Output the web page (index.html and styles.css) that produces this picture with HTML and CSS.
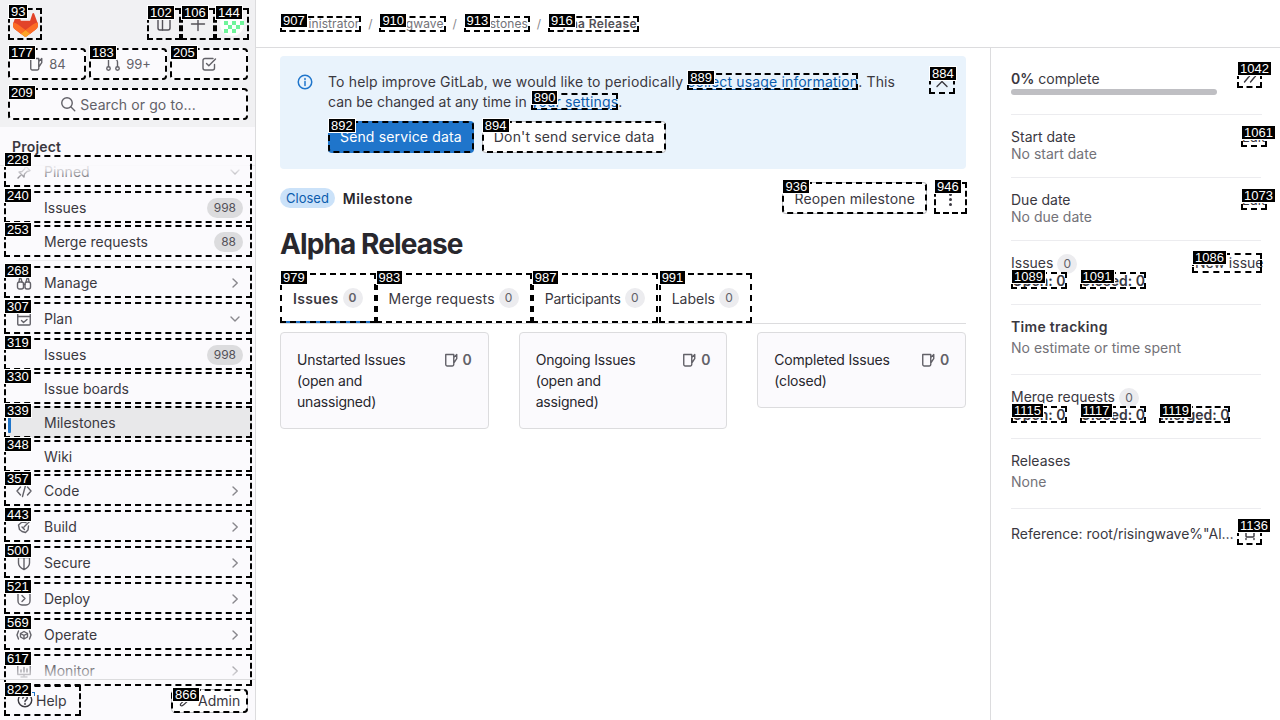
FILE: index.html
```html
<!DOCTYPE html>
<html lang="en">
<head>
<meta charset="utf-8">
<title>Alpha Release · Milestones</title>
<link rel="stylesheet" href="styles.css">
</head>
<body>
<svg class="defs" width="0" height="0" aria-hidden="true">
  <symbol id="i-issues" viewBox="0 0 16 16"><path d="M2.750 2.500h8v10a1.500 1.500 0 0 1-1.500 1.500h-5a1.500 1.500 0 0 1-1.500-1.500zM10.750 5.500l3-3v4.200l-3 4.300"/></symbol>
  <symbol id="i-mr" viewBox="0 0 16 16"><circle cx="3.500" cy="12.500" r="1.750"/><circle cx="12.500" cy="12.500" r="1.750"/><path d="M3.500 10.500v-8M1.500 2.500h4M12.500 10.500V6a3 3 0 0 0-3-3H8.500"/></symbol>
  <symbol id="i-todo" viewBox="0 0 16 16"><path d="M13.500 8.500v3.500a2 2 0 0 1-2 2H4a2 2 0 0 1-2-2V4.500a2 2 0 0 1 2-2h8M5.500 7.500l2.300 2.300L14.500 3"/></symbol>
  <symbol id="i-search" viewBox="0 0 16 16"><circle cx="7" cy="7" r="5.250"/><path d="m11 11 3.750 3.750"/></symbol>
  <symbol id="i-panel" viewBox="0 0 16 16"><rect x="2" y="2" width="12" height="12" rx="2"/><path d="M6.500 2v12"/></symbol>
  <symbol id="i-plus" viewBox="0 0 16 16"><path d="M8 1.500v13M1.500 8h13"/></symbol>
  <symbol id="i-pin" viewBox="0 0 16 16"><path d="M9.500 2 14 6.500l-3 1-2.500 2.500-.5 3L3 8l3-.5L8.500 5zM5.500 10.500 2 14"/></symbol>
  <symbol id="i-manage" viewBox="0 0 16 16"><rect x="1.500" y="7" width="6" height="7" rx="2"/><rect x="9" y="7" width="5.500" height="7" rx="2"/><path d="M7.500 9.500H9M3 7l.5-3.500h1.500L6 7M13 7l-.5-3.500H11L10 7"/></symbol>
  <symbol id="i-plan" viewBox="0 0 16 16"><rect x="1.750" y="2" width="12.500" height="12" rx="1"/><path d="M1.750 5.500h12.500M5.500 9.500l2 2 3.500-3"/></symbol>
  <symbol id="i-code" viewBox="0 0 16 16"><path d="M4.500 4 1 8l3.500 4M11.500 4 15 8l-3.500 4M9.500 2.500l-3 11"/></symbol>
  <symbol id="i-build" viewBox="0 0 16 16"><path d="M14.500 1c-.5 1.500-1.500 2.500-3 3.500L8 8M10 3.500 6 3 2.500 6l1 4.500 2.500 2 3.500 1 2.500-2.500.5-4M6 8l2.500 2.500"/></symbol>
  <symbol id="i-shield" viewBox="0 0 16 16"><path d="M2.500 2.500h11V8c0 3-2.500 5.200-5.500 6.500C5 13.200 2.500 11 2.500 8zM8 2.500v12"/></symbol>
  <symbol id="i-deploy" viewBox="0 0 16 16"><path d="M2 3v7a4 4 0 0 0 4 4h4a4 4 0 0 0 4-4V3M6 4.500l3 3-3 3M13 2.500h1"/></symbol>
  <symbol id="i-operate" viewBox="0 0 16 16"><path d="M8 4.500 11.500 6.500v3.500L8 12 4.500 10V6.500zM8 8.500V12M8 8.500l3.500-2M8 8.500l-3.500-2M2.500 4 1 8l1.500 4M13.500 4 15 8l-1.500 4"/></symbol>
  <symbol id="i-monitor" viewBox="0 0 16 16"><rect x="1.750" y="2" width="12.500" height="9.500"/><path d="M5 14h6M8 11.500V14M5 9V7M8 9V4.500M11 9V6"/></symbol>
  <symbol id="i-help" viewBox="0 0 16 16"><circle cx="8" cy="8" r="6.750"/><path d="M5.800 6.200c.2-1.300 1.100-2 2.300-2 1.300 0 2.200.8 2.200 1.900 0 1.800-2.300 1.700-2.300 3.500"/><path d="M8 11.400v1"/></symbol>
  <symbol id="i-admin" viewBox="0 0 16 16"><path d="M14.500 5.500c-.3 1.900-2.400 3.100-4.300 2.400L5 12.500c-.8.800-2 1.600-3 .8-.8-.9-.2-2.100.7-2.900l5-4.900c-.5-2 1-3.900 3-4l-1 2.200 1.800 1.800z"/></symbol>
  <symbol id="i-right" viewBox="0 0 16 16"><path d="m6 4 4.250 4L6 12"/></symbol>
  <symbol id="i-down" viewBox="0 0 16 16"><path d="M4 6l4 4 4-4"/></symbol>
  <symbol id="i-up" viewBox="0 0 16 16"><path d="M3 10.500 8 5.500l5 5"/></symbol>
  <symbol id="i-info" viewBox="0 0 16 16"><circle cx="8" cy="8" r="6.750"/><path d="M8 7.500V11.500M8 4.500v1"/></symbol>
  <symbol id="i-dchev" viewBox="0 0 16 16"><path d="m2.500 2 5 6-5 6M8.500 2l5 6-5 6"/></symbol>
  <symbol id="i-copy" viewBox="0 0 16 16"><rect x="4" y="4" width="8" height="8" rx="1"/><path d="M4 1.500v1M12 1.500v1M4 13.500v1M12 13.500v1"/></symbol>
</svg>

<aside class="sidebar">
  <div class="top">
    <div class="top-row">
      <a class="mark logo"><span class="tag">93</span>
        <svg width="25" height="24" viewBox="0 0 25 24"><path d="m24.507 9.5-.034-.09L21.082.562a.896.896 0 0 0-1.694.091l-2.29 7.01H7.825L5.535.653a.898.898 0 0 0-1.694-.09L.451 9.411.416 9.5a6.297 6.297 0 0 0 2.09 7.278l.012.01.03.022 5.16 3.867 2.56 1.935 1.554 1.176a1.051 1.051 0 0 0 1.268 0l1.555-1.176 2.56-1.935 5.197-3.89.014-.01A6.297 6.297 0 0 0 24.507 9.5Z" fill="#E24329"/><path d="m24.507 9.5-.034-.09a11.44 11.44 0 0 0-4.56 2.051l-7.447 5.632 4.742 3.584 5.197-3.89.014-.01A6.297 6.297 0 0 0 24.507 9.5Z" fill="#FC6D26"/><path d="m7.707 20.677 2.56 1.935 1.555 1.176a1.051 1.051 0 0 0 1.268 0l1.555-1.176 2.56-1.935-4.743-3.584-4.755 3.584Z" fill="#FCA326"/><path d="M5.01 11.461a11.43 11.43 0 0 0-4.56-2.05L.416 9.5a6.297 6.297 0 0 0 2.09 7.278l.012.01.03.022 5.16 3.867 4.745-3.584-7.444-5.632Z" fill="#FC6D26"/></svg>
      </a>
      <span class="grow"></span>
      <a class="mark square"><span class="tag">102</span><svg class="ico"><use href="#i-panel"/></svg></a>
      <a class="mark square"><span class="tag">106</span><svg class="ico"><use href="#i-plus"/></svg></a>
      <a class="mark square"><span class="tag">144</span>
        <svg width="24" height="24" viewBox="0 0 24 24"><circle cx="12" cy="12" r="12" fill="#fff"/><path d="M4 9h4v4H4zM12 9h4v4h-4zM20 9h4v4h-4zM8 13h4v4H8zM16 13h4v4h-4zM4 17h4v4H4zM12 17h4v4h-4z" fill="#6ff59a"/></svg>
      </a>
    </div>
    <div class="counts">
      <a class="mark count"><span class="tag">177</span><svg class="ico"><use href="#i-issues"/></svg><span>84</span></a>
      <a class="mark count"><span class="tag">183</span><svg class="ico"><use href="#i-mr"/></svg><span>99+</span></a>
      <a class="mark count"><span class="tag">205</span><svg class="ico"><use href="#i-todo"/></svg></a>
    </div>
    <a class="mark search"><span class="tag">209</span><svg class="ico"><use href="#i-search"/></svg><span>Search or go to...</span></a>
  </div>

  <div class="project-head">Project</div>
  <nav class="nav">
    <a class="row mark pinned"><span class="tag">228</span><svg class="ico"><use href="#i-pin"/></svg><span class="lbl">Pinned</span><svg class="ico chev"><use href="#i-down"/></svg></a>
    <a class="row mark first-pin plain"><span class="tag">240</span><span class="lbl">Issues</span><span class="pill">998</span></a>
    <a class="row mark tight plain"><span class="tag">253</span><span class="lbl">Merge requests</span><span class="pill">88</span></a>
    <div class="sep"></div>
    <a class="row mark"><span class="tag">268</span><svg class="ico"><use href="#i-manage"/></svg><span class="lbl">Manage</span><svg class="ico chev"><use href="#i-right"/></svg></a>
    <a class="row mark group"><span class="tag">307</span><svg class="ico"><use href="#i-plan"/></svg><span class="lbl">Plan</span><svg class="ico chev"><use href="#i-down"/></svg></a>
    <a class="row mark group plain"><span class="tag">319</span><span class="lbl">Issues</span><span class="pill">998</span></a>
    <a class="row mark tight plain"><span class="tag">330</span><span class="lbl">Issue boards</span></a>
    <a class="row mark tight plain active"><span class="tag">339</span><span class="lbl">Milestones</span></a>
    <a class="row mark tight plain"><span class="tag">348</span><span class="lbl">Wiki</span></a>
    <a class="row mark tight"><span class="tag">357</span><svg class="ico"><use href="#i-code"/></svg><span class="lbl">Code</span><svg class="ico chev"><use href="#i-right"/></svg></a>
    <a class="row mark group"><span class="tag">443</span><svg class="ico"><use href="#i-build"/></svg><span class="lbl">Build</span><svg class="ico chev"><use href="#i-right"/></svg></a>
    <a class="row mark group"><span class="tag">500</span><svg class="ico"><use href="#i-shield"/></svg><span class="lbl">Secure</span><svg class="ico chev"><use href="#i-right"/></svg></a>
    <a class="row mark group"><span class="tag">521</span><svg class="ico"><use href="#i-deploy"/></svg><span class="lbl">Deploy</span><svg class="ico chev"><use href="#i-right"/></svg></a>
    <a class="row mark group"><span class="tag">569</span><svg class="ico"><use href="#i-operate"/></svg><span class="lbl">Operate</span><svg class="ico chev"><use href="#i-right"/></svg></a>
    <a class="row mark group"><span class="tag">617</span><svg class="ico"><use href="#i-monitor"/></svg><span class="lbl">Monitor</span><svg class="ico chev"><use href="#i-right"/></svg></a>
  </nav>
  <div class="foot">
    <a class="mark help"><span class="tag">822</span><svg class="ico"><use href="#i-help"/></svg><span>Help</span></a>
    <a class="mark admin"><span class="tag">866</span><svg class="ico"><use href="#i-admin"/></svg><span>Admin</span></a>
  </div>
</aside>

<div class="main">
  <header class="crumbs">
    <a class="mark crumb"><span class="tag">907</span>Administrator</a><span class="slash">/</span>
    <a class="mark crumb"><span class="tag">910</span>risingwave</a><span class="slash">/</span>
    <a class="mark crumb"><span class="tag">913</span>Milestones</a><span class="slash">/</span>
    <a class="mark crumb current"><span class="tag">916</span>Alpha Release</a>
  </header>
  <div class="body">
    <main class="content">
      <section class="banner">
        <svg class="ico info"><use href="#i-info"/></svg>
        <div class="banner-text">
          <p>To help improve GitLab, we would like to periodically <a class="mark link"><span class="tag">889</span>collect usage information</a>. This <span class="tail">can be changed at any time in</span> <a class="mark link"><span class="tag">890</span>your settings</a>.</p>
          <div class="banner-btns">
            <a class="mark btn primary"><span class="tag">892</span>Send service data</a>
            <a class="mark btn"><span class="tag">894</span>Don't send service data</a>
          </div>
        </div>
        <a class="mark close"><span class="tag">884</span><svg class="ico"><use href="#i-up"/></svg></a>
      </section>

      <div class="status">
        <span class="badge">Closed</span>
        <strong class="status-name">Milestone</strong>
        <span class="grow"></span>
        <a class="mark btn reopen"><span class="tag">936</span>Reopen milestone</a>
        <a class="mark more"><span class="tag">946</span><span class="dots"><i></i><i></i><i></i></span></a>
      </div>

      <h1 class="title">Alpha Release</h1>

      <div class="tabs">
        <a class="mark tab on"><span class="tag">979</span>Issues<span class="num">0</span></a>
        <a class="mark tab wide"><span class="tag">983</span>Merge requests<span class="num">0</span></a>
        <a class="mark tab narrow"><span class="tag">987</span>Participants<span class="num">0</span></a>
        <a class="mark tab"><span class="tag">991</span>Labels<span class="num">0</span></a>
      </div>

      <div class="cards">
        <div class="card"><span class="card-title">Unstarted Issues (open and unassigned)</span><span class="card-count"><svg class="ico"><use href="#i-issues"/></svg>0</span></div>
        <div class="card"><span class="card-title">Ongoing Issues (open and assigned)</span><span class="card-count"><svg class="ico"><use href="#i-issues"/></svg>0</span></div>
        <div class="card"><span class="card-title">Completed Issues (closed)</span><span class="card-count"><svg class="ico"><use href="#i-issues"/></svg>0</span></div>
      </div>
    </main>

    <aside class="panel">
      <section class="block b-progress">
        <div class="progress">
          <div><b>0%</b> complete</div>
          <div class="bar"></div>
        </div>
        <a class="mark iconbtn"><span class="tag">1042</span><svg class="ico"><use href="#i-dchev"/></svg></a>
      </section>
      <section class="block b-date">
        <div><div>Start date</div><div class="muted">No start date</div></div>
        <a class="mark edit"><span class="tag">1061</span>Edit</a>
      </section>
      <section class="block b-date">
        <div><div>Due date</div><div class="muted">No due date</div></div>
        <a class="mark edit"><span class="tag">1073</span>Edit</a>
      </section>
      <section class="block b-links">
        <div class="head-line"><span>Issues<span class="num side">0</span></span><a class="mark newissue"><span class="tag">1086</span>New issue</a></div>
        <div class="stats"><a class="mark stat"><span class="tag">1089</span>Open: 0</a><a class="mark stat"><span class="tag">1091</span>Closed: 0</a></div>
      </section>
      <section class="block b-text">
        <div class="strong">Time tracking</div>
        <div class="muted">No estimate or time spent</div>
      </section>
      <section class="block b-links">
        <div class="head-line"><span>Merge requests<span class="num side">0</span></span></div>
        <div class="stats"><a class="mark stat"><span class="tag">1115</span>Open: 0</a><a class="mark stat"><span class="tag">1117</span>Closed: 0</a><a class="mark stat"><span class="tag">1119</span>Merged: 0</a></div>
      </section>
      <section class="block b-text b-rel">
        <div>Releases</div>
        <div class="muted">None</div>
      </section>
      <section class="block b-ref">
        <div class="refname">Reference: root/risingwave%"Alpha Release"</div>
        <a class="mark iconbtn copy"><span class="tag">1136</span><svg class="ico"><use href="#i-copy"/></svg></a>
      </section>
    </aside>
  </div>
</div>
</body>
</html>
```

FILE: styles.css
```css
* { box-sizing: border-box; }
html, body { margin: 0; height: 720px; overflow: hidden; }
body {
  display: flex;
  font-family: Inter, "Noto Sans", sans-serif;
  font-size: 14px;
  color: #3a383f;
  background: #fff;
}
.defs { position: absolute; }
a { color: inherit; text-decoration: none; }
p { margin: 0; }
b, strong { font-weight: 600; }
.grow { flex: 1; }

/* overlay annotations */
.mark { position: relative; outline: 2px dashed #000; outline-offset: -2px; }
.tag {
  position: absolute;
  top: -2px;
  left: 1px;
  z-index: 5;
  padding: 0 2px;
  height: 13px;
  font: 400 13px/13px "Liberation Sans", Arial, sans-serif;
  font-style: normal;
  letter-spacing: 0;
  color: #fff;
  background: #000;
  box-shadow: 0 0 0 1px #fff;
  white-space: nowrap;
  text-decoration: none;
}
.logo .tag { top: -3px; }

.ico {
  width: 16px;
  height: 16px;
  flex: none;
  fill: none;
  stroke: currentColor;
  stroke-width: 1.4;
  stroke-linecap: round;
  stroke-linejoin: round;
}

/* sidebar */
.sidebar {
  width: 256px;
  flex: none;
  height: 720px;
  display: flex;
  flex-direction: column;
  background: #fbfafd;
  border-right: 1px solid #dcdcde;
}
.top {
  height: 127px;
  flex: none;
  padding: 8px 6px 0 8px;
  background: #f1f1f3;
  color: #535158;
}
.top-row { display: flex; height: 32px; }
.logo { width: 34px; display: flex; align-items: center; justify-content: center; padding-top: 1px; }
.square { width: 34px; display: flex; align-items: center; justify-content: center; }
.counts {
  display: grid;
  grid-template-columns: repeat(3, 78px);
  gap: 3px;
  margin-top: 8px;
  width: 240px;
}
.count, .search {
  height: 32px;
  display: flex;
  align-items: center;
  justify-content: center;
  gap: 5px;
  background: #fbfafd;
  border-radius: 4px;
  font-size: 13px;
  color: #626168;
}
.search { width: 240px; margin-top: 8px; font-size: 14px; gap: 4px; letter-spacing: .1px; }

.project-head {
  position: relative;
  flex: none;
  height: 28px;
  padding: 11px 12px 0;
  font-weight: 600;
  line-height: 17px;
  letter-spacing: .2px;
}
.project-head::after {
  content: "";
  position: absolute;
  left: 0;
  right: 0;
  top: 38px;
  height: 1px;
  background: #ececef;
}
.nav {
  position: relative;
  flex: 1;
  min-height: 0;
  padding: 0 3px 0 4px;
  color: #3a383f;
}
.nav .ico { color: #626168; }
.nav::before, .nav::after {
  content: "";
  position: absolute;
  left: 6px;
  right: 6px;
  z-index: 2;
  pointer-events: none;
}
.nav::before { top: 10px; height: 18px; background: linear-gradient(rgba(251, 250, 253, .85) 20%, rgba(251, 250, 253, 0)); }
.nav::after { top: 505px; height: 19px; background: linear-gradient(rgba(251, 250, 253, 0), rgba(251, 250, 253, .8)); }
.row {
  display: flex;
  align-items: center;
  height: 32px;
  width: 248px;
  padding: 1px 9px 0 12px;
  gap: 12px;
}
.row.plain { padding-left: 40px; }
.row.first-pin { margin-top: 4px; }
.row.tight { margin-top: 2px; }
.row.group { margin-top: 4px; }
.lbl { flex: 1; }
.nav .chev { color: #89888d; }
.pill {
  height: 20px;
  padding: 0 7px;
  border-radius: 10px;
  background: #dcdcde;
  color: #535158;
  font-size: 12px;
  line-height: 20px;
}
.sep { height: 1px; margin: 3px 12px 5px; background: #ececef; }
.active {
  border-left: 4px solid transparent;
  padding-left: 36px !important;
  background: #e8e8ea;
  background-clip: padding-box;
}
.active .tag { left: -3px; }
.active::before {
  content: "";
  position: absolute;
  left: 0;
  top: 11px;
  width: 3px;
  height: 16px;
  background: #1f75cb;
  border-radius: 1px;
}
.foot {
  position: relative;
  flex: none;
  height: 41px;
  border-top: 1px solid #dcdcde;
  display: flex;
  justify-content: space-between;
  align-items: flex-start;
  padding: 5px 7px 0 4px;
  color: #3a383f;
}
.help {
  width: 77px;
  height: 31px;
  display: flex;
  align-items: center;
  gap: 3px;
  padding: 0 0 1px 13px;
}
.help::after {
  content: "";
  position: absolute;
  left: 27px;
  top: 7px;
  width: 3px;
  height: 3px;
  border-top: 1px solid #1f75cb;
  border-right: 1px solid #1f75cb;
}
.admin {
  width: 77px;
  height: 24px;
  margin-top: 4px;
  display: flex;
  align-items: center;
  gap: 5px;
  padding: 0 0 1px 7px;
  background: #fff;
  border: 1px solid #bfbfc3;
  border-radius: 4px;
}
.admin .ico { width: 14px; height: 14px; }

/* main */
.main { flex: 1; min-width: 0; display: flex; flex-direction: column; }
.crumbs {
  height: 48px;
  flex: none;
  display: flex;
  align-items: center;
  padding-left: 24px;
  border-bottom: 1px solid #dcdcde;
  font-size: 12px;
  letter-spacing: .1px;
  color: #737278;
  white-space: nowrap;
}
.crumb { padding: 0 2px; line-height: 16px; height: 16px; }
.crumb.current { font-weight: 600; color: #535158; letter-spacing: .35px; }
.slash { width: 18px; text-align: center; color: #89888d; }
.body { flex: 1; display: flex; min-height: 0; }
.content { flex: 1; min-width: 0; padding: 8px 24px 0; }

.banner {
  height: 113px;
  display: flex;
  padding: 16px 10px 0 17px;
  background: #e9f3fc;
  border-radius: 4px;
}
.info { color: #1f75cb; margin-top: 2px; stroke-width: 1.5; }
.banner-text { width: 582px; margin-left: 15px; line-height: 20px; letter-spacing: .15px; }
.tail { letter-spacing: 0; }
.link { color: #0b5cad; text-decoration: underline; text-underline-offset: 2px; }
.banner-btns { display: flex; gap: 8px; margin-top: 9px; }
.btn {
  height: 32px;
  display: inline-flex;
  align-items: center;
  padding: 0 12px;
  border-radius: 4px;
  background: #fff;
  box-shadow: inset 0 0 0 1px #bfbfc3;
  white-space: nowrap;
  letter-spacing: .15px;
}
.primary { background: #1f75cb; color: #fff; box-shadow: none; }
.close {
  width: 26px;
  height: 25px;
  margin: -3px 0 0 19px;
  padding-top: 4px;
  display: flex;
  align-items: center;
  justify-content: center;
  flex: none;
}

.status { display: flex; align-items: center; height: 32px; margin-top: 13px; margin-right: -1px; }
.badge {
  height: 20px;
  padding: 0 6px;
  border-radius: 10px;
  background: #cbe2f9;
  color: #0b5cad;
  font-size: 13px;
  line-height: 20px;
}
.status-name { margin-left: 8px; color: #28272d; letter-spacing: .4px; }
.more { width: 33px; height: 32px; margin-left: 7px; display: flex; align-items: center; justify-content: center; }
.dots { display: flex; flex-direction: column; gap: 2px; margin-top: 2px; }
.dots i { width: 3px; height: 3px; border-radius: 50%; background: #3a383f; display: block; }

.title {
  margin: 13px 0 0;
  font-size: 28px;
  font-weight: 700;
  line-height: 34px;
  color: #28272d;
  letter-spacing: -.9px;
}
.tabs { display: flex; gap: 1px; height: 51px; margin-top: 12px; border-bottom: 1px solid #dcdcde; }
.tab {
  height: 50px;
  display: flex;
  align-items: center;
  padding: 0 13px;
  gap: 4px;
  white-space: nowrap;
}
.tab.wide { letter-spacing: .15px; margin-left: -1px; }
.tab.narrow { letter-spacing: -.2px; margin-left: -1px; }
.tab.on { font-weight: 600; letter-spacing: .3px; box-shadow: inset 0 -2px 0 #1f75cb; }
.num {
  display: inline-block;
  min-width: 20px;
  height: 20px;
  border-radius: 10px;
  background: #ececef;
  color: #626168;
  font-size: 12px;
  font-weight: 400;
  line-height: 20px;
  text-align: center;
}
.tab.on .num { font-weight: 600; }

.cards {
  display: grid;
  grid-template-columns: repeat(3, 1fr);
  gap: 30px;
  align-items: start;
  margin-top: 8px;
}
.card {
  display: flex;
  justify-content: space-between;
  padding: 16px;
  background: #fbfafd;
  border: 1px solid #dcdcde;
  border-radius: 4px;
  line-height: 21px;
  color: #28272d;
  letter-spacing: -.2px;
}
.card-title { max-width: 125px; }
.card-count {
  display: flex;
  align-items: center;
  gap: 4px;
  height: 21px;
  font-weight: 600;
  color: #626168;
}

/* right panel */
.panel {
  width: 290px;
  flex: none;
  border-left: 1px solid #dcdcde;
  padding: 0 19px 0 20px;
  color: #3a383f;
}
.block { border-bottom: 1px solid #ececef; }
.muted { color: #737278; }
.strong { font-weight: 600; letter-spacing: .3px; }
.b-progress {
  height: 67px;
  display: flex;
  justify-content: space-between;
  align-items: flex-start;
  padding-top: 16px;
  margin-right: -1px;
}
.progress { width: 206px; padding-top: 6px; line-height: 18px; }
.bar { height: 6px; margin-top: 1px; border-radius: 3px; background: #bfbfc3; }
.iconbtn {
  width: 25px;
  height: 24px;
  display: flex;
  align-items: center;
  justify-content: center;
}
.b-date {
  display: flex;
  justify-content: space-between;
  align-items: flex-start;
  height: 63px;
  padding-top: 13px;
  line-height: 17px;
}
.edit {
  width: 26px;
  height: 19px;
  margin-right: -6px;
  line-height: 18px;
  padding-left: 1px;
  font-size: 13px;
}
.b-links { height: 64px; padding-top: 13px; line-height: 18px; }
.head-line { display: flex; justify-content: space-between; height: 18px; }
.head-line .side { margin-left: 4px; }
.newissue {
  width: 70px;
  height: 20px;
  margin: -1px -1px 0 0;
  line-height: 20px;
  padding-left: 3px;
  white-space: nowrap;
}
.stats { display: flex; gap: 13px; font-weight: 600; }
.stat { height: 17px; line-height: 17px; padding: 0 1px; }
.b-text { height: 70px; padding-top: 11px; line-height: 21px; }
.b-ref {
  border: 0;
  display: flex;
  justify-content: space-between;
  padding-top: 14px;
  line-height: 21px;
  margin-right: -1px;
}
.refname { width: 226px; white-space: nowrap; overflow: hidden; text-overflow: ellipsis; }
.copy { margin-top: -2px; }
```
